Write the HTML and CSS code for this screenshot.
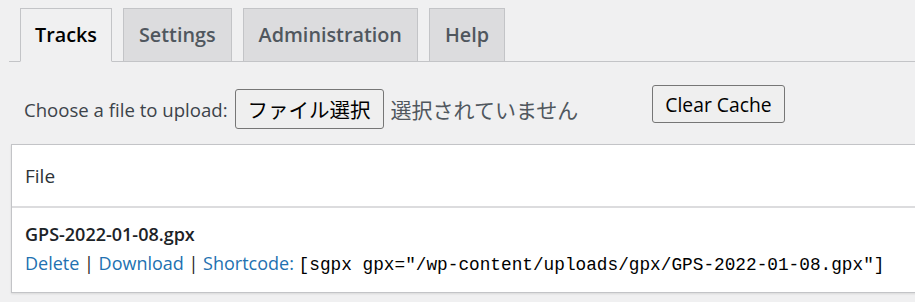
FILE: index.html
```html
<!DOCTYPE html>
<html>
	<head>
		<title>Tracks</title>
		<link rel="stylesheet" href="styles.css">
	</head>
	<body>
		<div id="wrap">
			<div id="nav-tabs">
				<a class="nav-tab nav-tab-active">Tracks</a>
				<a class="nav-tab">Settings</a>
				<a class="nav-tab">Administration</a>
				<a class="nav-tab">Help</a>
			</div>

			<div id="upload-row">
				<div class="upload-form">
					<span class="upload-label">Choose a file to upload:</span>
					<button type="button" class="file-button">ファイル選択</button>
					<span class="file-name">選択されていません</span>
				</div>
				<button type="button" class="cache-button">Clear Cache</button>
			</div>

			<div id="track-table">
				<div class="table-head">File</div>
				<div class="table-row">
					<div class="track-name">GPS-2022-01-08.gpx</div>
					<div class="track-actions">
						<a class="action-link">Delete</a> | <a class="action-link">Download</a> | <a class="action-link">Shortcode:</a>
						<code>[sgpx gpx="/wp-content/uploads/gpx/GPS-2022-01-08.gpx"]</code>
					</div>
				</div>
			</div>
		</div>
	</body>
</html>
```

FILE: styles.css
```css
html {
	height: 100%;
}

body {
	margin: 0;
	height: 100%;
	overflow: hidden;
	background-color: #f0f0f1;
	font-family: "Open Sans", "Noto Sans CJK JP", sans-serif;
	font-size: 18px;
	color: #3c434a;
}

#wrap {
	padding-left: 9px;
}

/* タブ */
#nav-tabs {
	display: flex;
	gap: 11px;
	padding: 8px 0 0 11px;
	border-bottom: 1px solid #c3c4c7;
}

.nav-tab {
	display: block;
	margin-bottom: -1px;
	padding: 7px 15px;
	line-height: 38px;
	font-size: 19.8px;
	font-weight: 600;
	color: #50575e;
	background-color: #dcdcde;
	border: 1px solid #c3c4c7;
	text-decoration: none;
}

.nav-tab-active {
	padding: 7px 14px;
	color: #000;
	background-color: #f0f0f1;
	border-bottom-color: #f0f0f1;
}

/* アップロード */
#upload-row {
	display: flex;
	align-items: flex-start;
	padding: 23px 0 0 15px;
}

.upload-form {
	display: flex;
	align-items: center;
	margin-top: 4px;
}

.upload-label {
	margin-right: 7px;
	font-size: 18.6px;
}

.file-button {
	height: 40px;
	padding: 0 12px;
	font-family: "Noto Sans CJK JP", sans-serif;
	font-size: 20.5px;
	color: #000;
	background-color: #efefef;
	border: 1px solid #767676;
	border-radius: 3px;
}

.file-name {
	margin-left: 7px;
	font-family: "Noto Sans CJK JP", sans-serif;
	font-size: 21px;
	color: #50575e;
}

.cache-button {
	height: 38px;
	margin-left: 74px;
	padding: 0 12px;
	font-family: "Open Sans", sans-serif;
	font-size: 19.3px;
	color: #000;
	background-color: #efefef;
	border: 1px solid #767676;
	border-radius: 3px;
}

/* テーブル */
#track-table {
	width: 980px;
	margin: 15px 0 0 2px;
	background-color: #fff;
	border: 1px solid #c3c4c7;
	box-shadow: 0 1px 2px rgba(0, 0, 0, 0.1);
}

.table-head {
	display: flex;
	align-items: center;
	height: 61px;
	padding-left: 13px;
	font-size: 19px;
	color: #2c3338;
	border-bottom: 2px solid #dcdcde;
}

.table-row {
	padding: 12px 13px 12px;
	line-height: 29px;
}

.track-name {
	font-weight: 600;
	color: #1d2327;
}

.track-actions {
	color: #1d2327;
}

.action-link {
	color: #2271b1;
}

code {
	font-family: "Liberation Mono", monospace;
	font-size: 17.75px;
	color: #000;
}
```
